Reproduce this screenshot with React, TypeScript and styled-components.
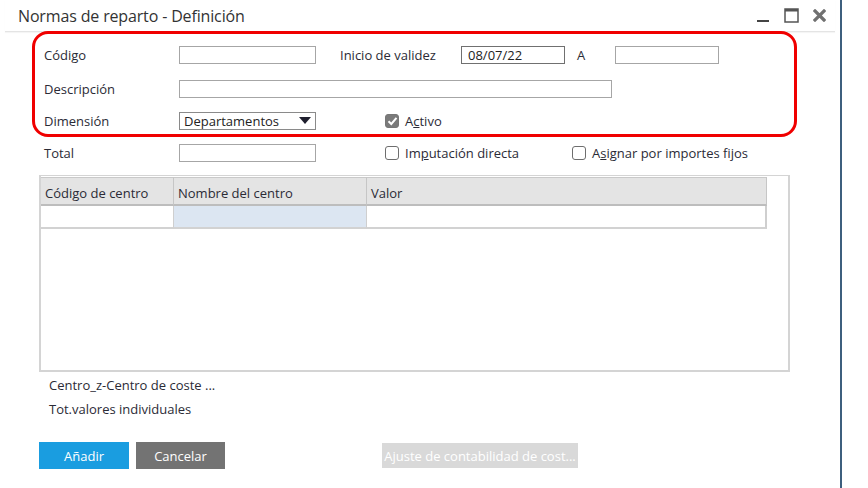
import React from "react";
import styled, { createGlobalStyle } from "styled-components";

const Global = createGlobalStyle`
  html, body { margin: 0; padding: 0; background: #fff; }
  body { font-family: "Open Sans", "Noto Sans", sans-serif; font-size: 13px; color: #2b2b36; }
  #root { width: 868px; height: 488px; overflow: hidden; }
`;

const Window = styled.div`
  position: relative;
  width: 840px;
  height: 488px;
  border-right: 2px solid #3d5f7e;
  background: #fff;
  box-sizing: content-box;
`;

const TitleBar = styled.div`
  height: 31px;
  margin: 0 5px 0 5px;
  display: flex;
  align-items: center;
  padding-left: 13px;
  border-bottom: 1px solid #e4e4e4;
  box-shadow: 0 1px 1px rgba(0, 0, 0, 0.04);
`;

const Title = styled.div`
  flex: 1;
  font-size: 16px;
  color: #333;
  letter-spacing: -0.15px;
`;

const WinButtons = styled.div`
  display: flex;
  align-items: center;
  gap: 14px;
  margin-right: 9px;
`;

const Content = styled.div`
  padding: 14px 0 0 44px;
`;

const Row = styled.div<{ $mt?: number }>`
  display: flex;
  align-items: center;
  height: 18px;
  margin-top: ${(p) => p.$mt ?? 0}px;
`;

const Label = styled.div<{ $w: number }>`
  width: ${(p) => p.$w}px;
  flex: none;
  white-space: nowrap;
`;

const Input = styled.div<{ $w: number; $dark?: boolean }>`
  width: ${(p) => p.$w}px;
  height: 18px;
  box-sizing: border-box;
  border: 1px solid ${(p) => (p.$dark ? "#707070" : "#a6a6a6")};
  flex: none;
  display: flex;
  align-items: center;
  padding-left: 6px;
  color: #222;
`;

const Select = styled(Input)`
  justify-content: space-between;
  padding: 0 4px 0 4px;
  border-color: #8a8a8a;
`;

const Gap = styled.div<{ $w: number }>`
  width: ${(p) => p.$w}px;
  flex: none;
`;

const Check = styled.div<{ $on?: boolean }>`
  width: 14px;
  height: 14px;
  box-sizing: border-box;
  border-radius: 3px;
  border: 1px solid ${(p) => (p.$on ? "#777" : "#6e6e6e")};
  background: ${(p) => (p.$on ? "#7a7a7a" : "#fff")};
  display: flex;
  align-items: center;
  justify-content: center;
  flex: none;
  margin-right: 6px;
`;

const CheckGroup = styled.div<{ $w?: number }>`
  display: flex;
  align-items: center;
  width: ${(p) => (p.$w ? `${p.$w}px` : "auto")};
  flex: none;
  white-space: nowrap;
`;

const U = styled.span`
  text-decoration: underline;
  text-underline-offset: 1px;
`;

const Annotation = styled.div`
  position: absolute;
  left: 32px;
  top: 31px;
  width: 765px;
  height: 106px;
  box-sizing: border-box;
  border: 3px solid #f00000;
  border-radius: 16px;
  pointer-events: none;
`;

const TableBox = styled.div`
  margin: 13px 0 0 -5px;
  width: 751px;
  height: 197px;
  box-sizing: border-box;
  border: 2px solid #d4d4d4;
  border-top-width: 1px;
  padding-top: 1px;
`;

const Grid = styled.div`
  width: 726px;
  display: grid;
  grid-template-columns: 133px 193px 1fr;
`;

const Head = styled.div`
  height: 29px;
  box-sizing: border-box;
  background: #e4e4e4;
  border-right: 1px solid #c6c6c6;
  border-bottom: 2px solid #bdbdbd;
  border-top: 1px solid #c9c9c9;
  display: flex;
  align-items: center;
  padding: 3px 0 0 4px;
  white-space: nowrap;
  &:last-child { border-right: 3px solid #c2c2c2; }
`;

const Cell = styled.div<{ $sel?: boolean }>`
  height: 23px;
  box-sizing: border-box;
  background: ${(p) => (p.$sel ? "#dce6f2" : "#fff")};
  border-right: 1px solid #cfcfcf;
  border-bottom: 2px solid #d2d2d2;
  &:last-child { border-right: 2px solid #cfcfcf; }
`;

const Info = styled.div<{ $mt: number }>`
  margin: ${(p) => p.$mt}px 0 0 5px;
  line-height: 16px;
`;

const Buttons = styled.div`
  display: flex;
  margin: 25px 0 0 -5px;
  align-items: center;
`;

const Btn = styled.div<{ $bg: string; $w: number; $h?: number }>`
  width: ${(p) => p.$w}px;
  height: ${(p) => p.$h ?? 27}px;
  background: ${(p) => p.$bg};
  color: #fff;
  display: flex;
  align-items: center;
  justify-content: center;
  font-size: 13px;
  flex: none;
  white-space: nowrap;
  overflow: hidden;
`;

export default function App() {
  return (
    <>
      <Global />
      <Window>
        <TitleBar>
          <Title>Normas de reparto - Definición</Title>
          <WinButtons>
            <svg width="14" height="16" viewBox="0 0 14 16">
              <rect x="1" y="12" width="12" height="2" fill="#444" />
            </svg>
            <svg width="15" height="15" viewBox="0 0 15 15">
              <rect x="1" y="1" width="13" height="13" fill="none" stroke="#555" strokeWidth="1.5" />
              <rect x="1" y="1" width="13" height="2.5" fill="#555" />
            </svg>
            <svg width="13" height="13" viewBox="0 0 13 13">
              <path d="M2 2 L11 11 M11 2 L2 11" stroke="#707070" strokeWidth="3.2" strokeLinecap="square" />
            </svg>
          </WinButtons>
        </TitleBar>
        <Annotation />
        <Content>
          <Row>
            <Label $w={135}>Código</Label>
            <Input $w={137} />
            <Gap $w={24} />
            <Label $w={121}>Inicio de validez</Label>
            <Input $w={104} $dark>08/07/22</Input>
            <Gap $w={12} />
            <Label $w={38}>A</Label>
            <Input $w={104} />
          </Row>
          <Row $mt={16}>
            <Label $w={135}>Descripción</Label>
            <Input $w={433} />
          </Row>
          <Row $mt={14}>
            <Label $w={135}>Dimensión</Label>
            <Select $w={137}>
              <span>Departamentos</span>
              <svg width="12" height="8" viewBox="0 0 12 8">
                <path d="M0 0 H12 L6 7 Z" fill="#1f1f2e" />
              </svg>
            </Select>
            <Gap $w={69} />
            <CheckGroup>
              <Check $on>
                <svg width="11" height="10" viewBox="0 0 11 10">
                  <path d="M1.5 5.2 L4.3 8 L9.5 1.8" stroke="#fff" strokeWidth="2" fill="none" />
                </svg>
              </Check>
              <span>
                A<U>c</U>tivo
              </span>
            </CheckGroup>
          </Row>
          <Row $mt={14}>
            <Label $w={135}>Total</Label>
            <Input $w={137} />
            <Gap $w={69} />
            <CheckGroup $w={187}>
              <Check />
              <span>
                Im<U>p</U>utación directa
              </span>
            </CheckGroup>
            <CheckGroup>
              <Check />
              <span>
                A<U>s</U>ignar por importes fijos
              </span>
            </CheckGroup>
          </Row>
          <TableBox>
            <Grid>
              <Head>Código de centro</Head>
              <Head>Nombre del centro</Head>
              <Head>Valor</Head>
              <Cell />
              <Cell $sel />
              <Cell />
            </Grid>
          </TableBox>
          <Info $mt={5}>Centro_z-Centro de coste ...</Info>
          <Info $mt={8}>Tot.valores individuales</Info>
          <Buttons>
            <Btn $bg="#1a9de0" $w={90}>Añadir</Btn>
            <Gap $w={7} />
            <Btn $bg="#737373" $w={89}>Cancelar</Btn>
            <Gap $w={157} />
            <Btn $bg="#d9d9d9" $w={196} $h={25}>
              Ajuste de contabilidad de cost...
            </Btn>
          </Buttons>
        </Content>
      </Window>
    </>
  );
}
